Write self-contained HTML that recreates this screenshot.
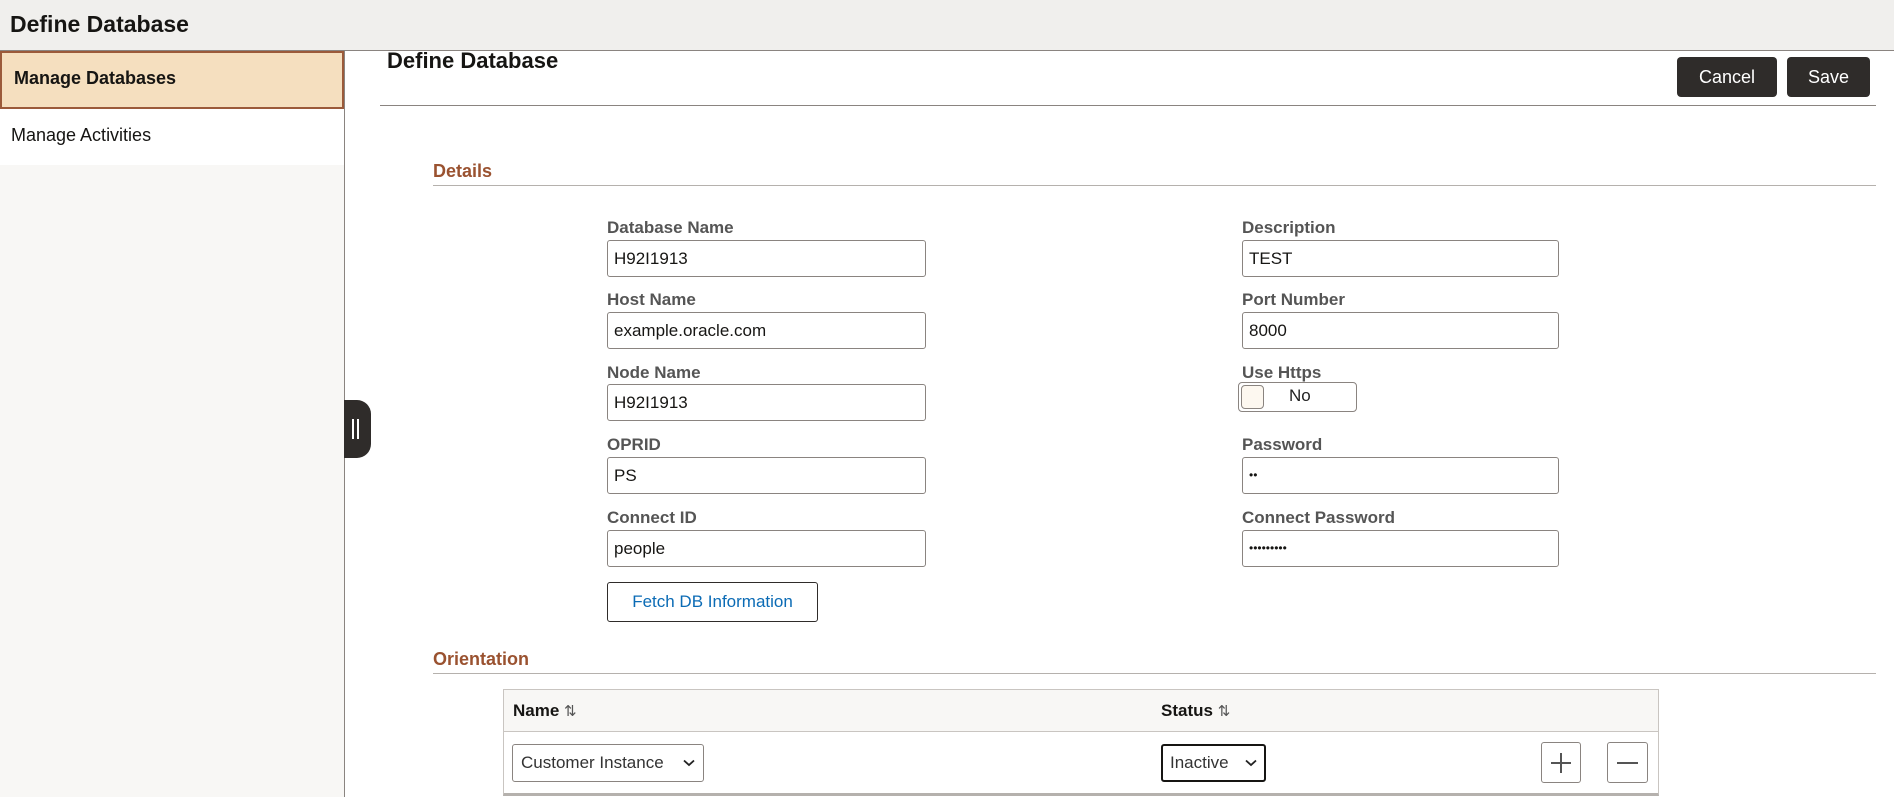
<!DOCTYPE html>
<html><head><meta charset="utf-8"><style>
*{box-sizing:border-box;margin:0;padding:0}
body{width:1894px;height:797px;overflow:hidden;background:#fff;font-family:"Liberation Sans",Arial,sans-serif;position:relative;color:#222}
.a{position:absolute}
.hdr{left:0;top:0;width:1894px;height:51px;background:#f0efed;border-bottom:1px solid #8a8480}
.hdr span{position:absolute;left:10px;top:11px;font-size:23px;font-weight:bold;color:#161513}
.side{left:0;top:51px;width:345px;height:746px;background:#f8f7f5;border-right:1px solid #8a8480}
.lbl{font-size:17px;font-weight:bold;color:#555}
.inp{height:37px;border:1px solid #8a8480;border-radius:3px;background:#fff;font-size:17px;padding:0 6px;line-height:35px;color:#161513}
.btn{background:#2f2c2a;color:#fff;border-radius:4px;font-size:18px;text-align:center;line-height:40px;height:40px}
.sec{font-size:18px;font-weight:bold;color:#9a5230}
.line{height:1px;background:#b5b1ad}
svg.ch{position:absolute;top:14px}
</style></head><body>
<div class="a hdr"><span>Define Database</span></div>
<div class="a side">
  <div class="a" style="left:0;top:0;width:344px;height:58px;background:#f5dfbf;border:2px solid #9b5a3a"></div>
  <div class="a" style="left:14px;top:17px;font-size:18px;font-weight:bold;color:#161513">Manage Databases</div>
  <div class="a" style="left:0;top:58px;width:344px;height:56px;background:#fff"></div>
  <div class="a" style="left:11px;top:74px;font-size:18px;color:#161513">Manage Activities</div>
</div>
<div class="a" style="left:344px;top:400px;width:27px;height:58px;background:#2f2c2a;border-radius:0 14px 14px 0"></div>
<div class="a" style="left:352px;top:419px;width:2px;height:20px;background:#fff"></div>
<div class="a" style="left:357px;top:419px;width:2px;height:20px;background:#fff"></div>

<div class="a" style="left:387px;top:48px;font-size:22px;font-weight:bold;color:#161513">Define Database</div>
<div class="a btn" style="left:1677px;top:57px;width:100px">Cancel</div>
<div class="a btn" style="left:1787px;top:57px;width:83px">Save</div>
<div class="a" style="left:380px;top:105px;width:1496px;height:1px;background:#8a8480"></div>

<div class="a sec" style="left:433px;top:161px">Details</div>
<div class="a line" style="left:433px;top:185px;width:1443px"></div>

<div class="a lbl" style="left:607px;top:218px">Database Name</div>
<div class="a inp" style="left:607px;top:240px;width:319px">H92I1913</div>
<div class="a lbl" style="left:607px;top:290px">Host Name</div>
<div class="a inp" style="left:607px;top:312px;width:319px">example.oracle.com</div>
<div class="a lbl" style="left:607px;top:363px">Node Name</div>
<div class="a inp" style="left:607px;top:384px;width:319px">H92I1913</div>
<div class="a lbl" style="left:607px;top:435px">OPRID</div>
<div class="a inp" style="left:607px;top:457px;width:319px">PS</div>
<div class="a lbl" style="left:607px;top:508px">Connect ID</div>
<div class="a inp" style="left:607px;top:530px;width:319px">people</div>
<div class="a" style="left:607px;top:582px;width:211px;height:40px;border:1px solid #2f2c2a;border-radius:3px;color:#0b6bb5;font-size:17px;text-align:center;line-height:38px">Fetch DB Information</div>

<div class="a lbl" style="left:1242px;top:218px">Description</div>
<div class="a inp" style="left:1242px;top:240px;width:317px">TEST</div>
<div class="a lbl" style="left:1242px;top:290px">Port Number</div>
<div class="a inp" style="left:1242px;top:312px;width:317px">8000</div>
<div class="a lbl" style="left:1242px;top:363px">Use Https</div>
<div class="a" style="left:1238px;top:382px;width:119px;height:30px;border:1px solid #8a8480;border-radius:4px;background:#fff"></div>
<div class="a" style="left:1241px;top:385px;width:23px;height:24px;border:1px solid #8a8480;border-radius:4px;background:#fdf8f0"></div>
<div class="a" style="left:1289px;top:386px;font-size:17px">No</div>
<div class="a lbl" style="left:1242px;top:435px">Password</div>
<div class="a inp" style="left:1242px;top:457px;width:317px;font-size:12px">••</div>
<div class="a lbl" style="left:1242px;top:508px">Connect Password</div>
<div class="a inp" style="left:1242px;top:530px;width:317px;font-size:12px">•••••••••</div>

<div class="a sec" style="left:433px;top:649px">Orientation</div>
<div class="a line" style="left:433px;top:673px;width:1443px"></div>

<div class="a" style="left:503px;top:689px;width:1156px;height:107px;border:1px solid #c9c5c1;border-bottom:3px solid #b5b1ad;background:#fff"></div>
<div class="a" style="left:504px;top:690px;width:1154px;height:42px;background:#f8f7f5;border-bottom:1px solid #c9c5c1"></div>
<div class="a" style="left:513px;top:701px;font-size:17px;font-weight:bold;color:#161513">Name <span style="font-weight:normal;color:#555;font-size:15px">⇅</span></div>
<div class="a" style="left:1161px;top:701px;font-size:17px;font-weight:bold;color:#161513">Status <span style="font-weight:normal;color:#555;font-size:15px">⇅</span></div>
<div class="a" style="left:512px;top:744px;width:192px;height:38px;border:1px solid #8a8480;border-radius:3px;font-size:17px;line-height:36px;padding-left:8px;color:#333">Customer Instance<svg class="ch" style="left:170px" width="12" height="8" viewBox="0 0 12 8"><path d="M1 1.5L6 6L11 1.5" fill="none" stroke="#222" stroke-width="1.8"/></svg></div>
<div class="a" style="left:1161px;top:744px;width:105px;height:38px;border:2px solid #161513;border-radius:3px;font-size:17px;line-height:34px;padding-left:7px;color:#333">Inactive<svg class="ch" style="left:82px;top:13px" width="12" height="8" viewBox="0 0 12 8"><path d="M1 1.5L6 6L11 1.5" fill="none" stroke="#222" stroke-width="1.8"/></svg></div>
<div class="a" style="left:1541px;top:742px;width:40px;height:41px;border:1px solid #8a8480;border-radius:3px"></div>
<div class="a" style="left:1551px;top:762px;width:20px;height:2px;background:#555"></div>
<div class="a" style="left:1560px;top:753px;width:2px;height:20px;background:#555"></div>
<div class="a" style="left:1607px;top:742px;width:41px;height:41px;border:1px solid #8a8480;border-radius:3px"></div>
<div class="a" style="left:1617px;top:762px;width:21px;height:2px;background:#555"></div>
</body></html>
